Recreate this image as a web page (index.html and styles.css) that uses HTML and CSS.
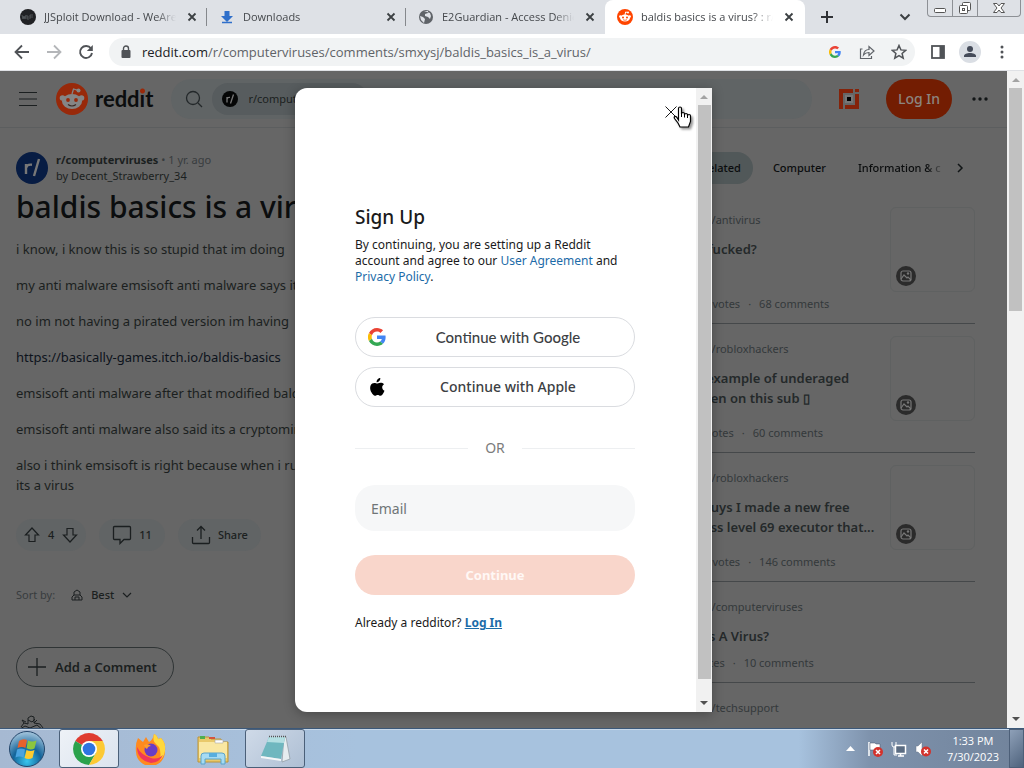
FILE: index.html
```html
<!DOCTYPE html>
<html lang="en">
<head>
    <meta charset="UTF-8">
    <meta name="viewport" content="width=device-width, initial-scale=1.0">
    <title>baldis basics is a virus? : r/computerviruses</title>
    <link rel="stylesheet" href="styles.css">
</head>
<body>

    <!-- Shared icons -->
    <svg class="sprite" aria-hidden="true">
        <symbol id="i-close" viewBox="0 0 16 16"><path d="M4.5 4.5l7 7M11.5 4.5l-7 7" stroke="#3c4043" stroke-width="1.8" fill="none"/></symbol>
        <symbol id="i-google" viewBox="0 0 48 48">
            <path fill="#ea4335" d="M24 9.5c3.5 0 6.700 1.200 9.200 3.600l6.900-6.900C35.900 2.400 30.500 0 24 0 14.600 0 6.500 5.400 2.600 13.200l8 6.200C12.400 13.700 17.700 9.500 24 9.500z"/>
            <path fill="#4285f4" d="M47 24.500c0-1.600-.2-3.100-.4-4.500H24v9h12.900c-.6 3-2.300 5.500-4.800 7.200l7.700 6C44.400 38 47 31.800 47 24.500z"/>
            <path fill="#fbbc05" d="M10.500 28.600a14.500 14.500 0 0 1 0-9.200l-8-6.200a24 24 0 0 0 0 21.600z"/>
            <path fill="#34a853" d="M24 48c6.500 0 11.900-2.100 15.900-5.800l-7.700-6c-2.200 1.500-4.900 2.300-8.200 2.300-6.300 0-11.600-4.200-13.500-9.900l-8 6.200C6.500 42.600 14.600 48 24 48z"/>
        </symbol>
        <symbol id="i-picture" viewBox="0 0 20 20">
            <circle cx="10" cy="10" r="10" fill="#2b2b2b"/>
            <rect x="5" y="5" width="10" height="10" rx="2" fill="none" stroke="#777" stroke-width="1.200"/>
            <path d="M5 13l3-4 3 3 1-1 3 3" fill="none" stroke="#777" stroke-width="1.200"/><circle cx="12" cy="7.500" r="1.200" fill="#777"/>
        </symbol>
    </svg>

    <!-- Browser tabs -->
    <header class="tab-strip">
        <div class="tab">
            <svg class="favicon" viewBox="0 0 16 16"><circle cx="8" cy="8" r="8" fill="#202124"/><path d="M2 6l1 4 1-3 1 3 1-4M7 6v4h2M7 8h2M10 6v4M10 6h3M10 8h3" stroke="#5b5f63" fill="none" stroke-width=".8"/></svg>
            <span class="tab-title">JJSploit Download - WeAreDevs</span>
            <button class="tab-close" aria-label="Close tab"><svg viewBox="0 0 16 16"><use href="#i-close"/></svg></button>
        </div>
        <div class="tab">
            <svg class="favicon" viewBox="0 0 16 16"><path d="M5.500 2h5v5H14l-6 6-6-6h3.500z" fill="#2f6fca"/><path d="M3 13.500h10" stroke="#2f6fca" stroke-width="1.500"/></svg>
            <span class="tab-title">Downloads</span>
            <button class="tab-close" aria-label="Close tab"><svg viewBox="0 0 16 16"><use href="#i-close"/></svg></button>
        </div>
        <div class="tab">
            <svg class="favicon" viewBox="0 0 16 16"><circle cx="8" cy="8" r="7" fill="#5f6368"/><path d="M2 7l3 1 2 2-1 4-3-3zM6 2l4 0 0 2-3 1 0 2 3 1 2 2 1-3-1-3z" fill="#dee1e6"/></svg>
            <span class="tab-title">E2Guardian - Access Denied</span>
            <button class="tab-close" aria-label="Close tab"><svg viewBox="0 0 16 16"><use href="#i-close"/></svg></button>
        </div>
        <div class="tab tab-active">
            <svg class="favicon" viewBox="0 0 16 16"><circle cx="8" cy="8" r="8" fill="#ff4500"/><ellipse cx="8" cy="9" rx="5" ry="3.500" fill="#fff"/><circle cx="3.300" cy="7.500" r="1.200" fill="#fff"/><circle cx="12.700" cy="7.500" r="1.200" fill="#fff"/><path d="M8 6l.6-3 2.200.5" stroke="#fff" fill="none"/><circle cx="11" cy="3.600" r="1" fill="#fff"/><circle cx="6" cy="8.500" r="1" fill="#ff4500"/><circle cx="10" cy="8.500" r="1" fill="#ff4500"/><path d="M6 10.700q2 1.200 4 0" stroke="#ff4500" fill="none" stroke-width=".7"/></svg>
            <span class="tab-title">baldis basics is a virus? : r/computerviruses</span>
            <button class="tab-close" aria-label="Close tab"><svg viewBox="0 0 16 16"><use href="#i-close"/></svg></button>
        </div>
        <button class="new-tab" aria-label="New tab"><svg viewBox="0 0 16 16"><path d="M8 2v12M2 8h12" stroke="#303236" stroke-width="2"/></svg></button>
        <button class="tab-search" aria-label="Search tabs"><svg viewBox="0 0 16 16"><path d="M3.500 5.500L8 10l4.500-4.500" stroke="#3c4043" stroke-width="2" fill="none"/></svg></button>
        <div class="window-controls">
            <button aria-label="Minimize"><svg width="24" height="16" viewBox="0 0 24 16"><rect x="6.500" y="8.500" width="11" height="4" rx="1" fill="#fff" stroke="#555"/></svg></button>
            <button aria-label="Restore"><svg width="24" height="16" viewBox="0 0 24 16"><rect x="9.500" y="2.500" width="8" height="8" rx="1" fill="#fff" stroke="#555"/><rect x="6.500" y="5.500" width="8" height="8" rx="1" fill="#fff" stroke="#555"/><rect x="9.500" y="8.500" width="2" height="2" fill="#fff" stroke="#555"/></svg></button>
            <button aria-label="Close" class="window-close"><svg width="24" height="16" viewBox="0 0 24 16"><path d="M6.500 3.500h3.500l2 2.500 2-2.500h3.500L14 8l3.500 4.500H14L12 10l-2 2.500H6.500L10 8z" fill="#fff" stroke="#555"/></svg></button>
        </div>
    </header>

    <!-- Address bar -->
    <div class="toolbar">
        <button aria-label="Back"><svg viewBox="0 0 16 16"><path d="M15 8H2M8 1.500L1.500 8 8 14.500" stroke="#505357" stroke-width="1.800" fill="none"/></svg></button>
        <button aria-label="Forward"><svg viewBox="0 0 16 16"><path d="M1 8h13M8 1.500L14.500 8 8 14.500" stroke="#b4b6b9" stroke-width="1.800" fill="none"/></svg></button>
        <button aria-label="Reload"><svg viewBox="0 0 16 16"><path d="M13 4.500A6 6 0 1 0 14 9" stroke="#505357" stroke-width="1.900" fill="none"/><path d="M14.800 1v6H8.800z" fill="#505357"/></svg></button>
        <div class="omnibox">
            <svg class="lock" viewBox="0 0 12 14"><rect x="1.500" y="5" width="9" height="8" rx="1" fill="#505357"/><path d="M3.500 6V3.500a2.500 2.500 0 0 1 5 0V6" stroke="#505357" stroke-width="1.400" fill="none"/></svg>
            <span class="url"><span class="url-host">reddit.com</span>/r/computerviruses/comments/smxysj/baldis_basics_is_a_virus/</span>
            <button aria-label="Search with Google"><svg class="small" viewBox="0 0 48 48"><use href="#i-google"/></svg></button>
            <button aria-label="Share this page"><svg viewBox="0 0 16 16"><path d="M3.500 5H1.500v9.500h11V12M4.500 11c.5-4 2.500-5.500 5.500-5.500V2.500L15 7l-5 4.500V8.500c-2.500 0-4 .5-5.500 2.500z" stroke="#5f6368" stroke-width="1.200" fill="none"/></svg></button>
            <button aria-label="Bookmark this tab"><svg viewBox="0 0 16 16"><path d="M8 1.500l1.900 4.400 4.800.4-3.600 3.200 1.100 4.700L8 11.700l-4.200 2.500 1.100-4.700L1.300 6.300l4.800-.4z" stroke="#505357" stroke-width="1.500" fill="none"/></svg></button>
        </div>
        <button class="side-panel" aria-label="Side panel"><svg viewBox="0 0 16 16"><rect x="2" y="2" width="12" height="12" fill="none" stroke="#505357" stroke-width="1.800"/><path d="M9.500 2H14v12H9.500z" fill="#505357"/></svg></button>
        <button class="profile" aria-label="Profile"><svg viewBox="0 0 22 22"><circle cx="11" cy="11" r="11" fill="#dadee4"/><circle cx="11" cy="8" r="3" fill="#454b59"/><path d="M5 16v-1c0-2 3-3 6-3s6 1 6 3v1z" fill="#454b59"/></svg></button>
        <button aria-label="Menu"><svg viewBox="0 0 16 16"><circle cx="8" cy="3" r="1.500" fill="#505357"/><circle cx="8" cy="8" r="1.500" fill="#505357"/><circle cx="8" cy="13" r="1.500" fill="#505357"/></svg></button>
    </div>

    <div class="viewport">
        <div class="page">

            <!-- Site header -->
            <nav class="site-header">
                <button class="icon-btn" aria-label="Open navigation"><svg width="20" height="20" viewBox="0 0 20 20"><path d="M1 3.500h18M1 10h18M1 16.500h18" stroke="#1b1f20" stroke-width="1.200"/></svg></button>
                <a class="brand" href="#">
                    <svg width="32" height="32" viewBox="0 0 32 32"><circle cx="16" cy="16" r="16" fill="#98290a"/><ellipse cx="16" cy="18.500" rx="10" ry="7.500" fill="#858585"/><circle cx="6.500" cy="15" r="2.800" fill="#858585"/><circle cx="25.500" cy="15" r="2.800" fill="#858585"/><path d="M16 11l1.500-5 4.500 1.300" stroke="#858585" stroke-width="1.300" fill="none"/><circle cx="22.500" cy="7.500" r="2" fill="#858585"/><circle cx="12" cy="17" r="1.900" fill="#98290a"/><circle cx="20" cy="17" r="1.900" fill="#98290a"/><path d="M12 21.500q4 3 8 0" stroke="#3a2a25" stroke-width="1.200" fill="none"/></svg>
                    <span class="wordmark">redd<span class="dot-i">ı</span>t</span>
                </a>
                <div class="search">
                    <svg width="20" height="20" viewBox="0 0 20 20"><circle cx="9" cy="9" r="6.500" fill="none" stroke="#23282a" stroke-width="1.300"/><path d="M14 14l4 4" stroke="#23282a" stroke-width="1.300"/></svg>
                    <span class="search-chip">
                        <svg width="16" height="16" viewBox="0 0 16 16"><circle cx="8" cy="8" r="8" fill="#050606"/><path d="M5 11.500V6M5 8q.5-2 3-1.600M11.500 3.500l-3 9" stroke="#777" stroke-width="1.300" fill="none"/></svg>
                        r/computerviruses
                    </span>
                </div>
                <button class="icon-btn" aria-label="Advertise"><svg width="20" height="20" viewBox="0 0 20 20"><path d="M2 20V2h12M6 18h12V5M18 0v3" stroke="#84230a" stroke-width="4" fill="none"/><rect x="6" y="6" width="8" height="8" fill="#777"/><rect x="8" y="8" width="4" height="4" fill="#000"/></svg></button>
                <button class="login-btn">Log In</button>
                <button class="icon-btn" aria-label="More"><svg width="20" height="20" viewBox="0 0 20 20"><g fill="#111516"><circle cx="4" cy="10" r="1.700"/><circle cx="10" cy="10" r="1.700"/><circle cx="16" cy="10" r="1.700"/></g></svg></button>
            </nav>

            <div class="columns">
                <!-- Post -->
                <main class="post">
                    <div class="byline">
                        <svg width="32" height="32" viewBox="0 0 32 32"><circle cx="16" cy="16" r="16" fill="#071c43"/><path d="M10 22V12M10 16q1-4 6-3.300M23 7l-5 17" stroke="#777" stroke-width="2.400" fill="none"/></svg>
                        <div>
                            <div><b>r/computerviruses</b> <span class="muted">• 1 yr. ago</span></div>
                            <div>by Decent_Strawberry_34</div>
                        </div>
                    </div>
                    <h1>baldis basics is a virus?</h1>
                    <div class="post-body">
                        <p>i know, i know this is so stupid that im doing</p>
                        <p>my anti malware emsisoft anti malware says its</p>
                        <p>no im not having a pirated version im having</p>
                        <p><a href="#">https://basically-games.itch.io/baldis-basics</a></p>
                        <p>emsisoft anti malware after that modified baldis</p>
                        <p>emsisoft anti malware also said its a cryptominer</p>
                        <p>also i think emsisoft is right because when i run<br>its a virus</p>
                    </div>
                    <div class="actions">
                        <div class="pill votes">
                            <button aria-label="Upvote"><svg width="16" height="16" viewBox="0 0 16 16"><path d="M8 1l6.500 7H11v6.500H5V8H1.500z" fill="none" stroke="#1b1f20" stroke-width="1.200"/></svg></button>
                            <span>4</span>
                            <button aria-label="Downvote"><svg width="16" height="16" viewBox="0 0 16 16"><path d="M8 15L1.500 8H5V1.500h6V8h3.500z" fill="none" stroke="#1b1f20" stroke-width="1.200"/></svg></button>
                        </div>
                        <button class="pill"><svg width="20" height="20" viewBox="0 0 20 20"><path d="M2.500 1.500h15a1 1 0 0 1 1 1v11a1 1 0 0 1-1 1H12L8 18.500v-4H2.500a1 1 0 0 1-1-1v-11a1 1 0 0 1 1-1z" fill="none" stroke="#1b1f20" stroke-width="1.300"/></svg>11</button>
                        <button class="pill"><svg width="20" height="20" viewBox="0 0 20 20"><path d="M1.500 12v5.500a1 1 0 0 0 1 1h15a1 1 0 0 0 1-1V12M10 14V2M6 5.500l4-4 4 4" fill="none" stroke="#1b1f20" stroke-width="1.300"/></svg>Share</button>
                    </div>
                    <div class="sort">
                        <span class="muted">Sort by:</span>
                        <button class="sort-btn">
                            <svg width="12" height="12" viewBox="0 0 12 12"><path d="M1 11V8l2-2V3l3-2 3 2v3l2 2v3zM3 6h6M4 11V8h4v3" fill="none" stroke="#1b1f20"/></svg>
                            Best
                            <svg width="10" height="10" viewBox="0 0 10 10"><path d="M1 3l4 4 4-4" fill="none" stroke="#1b1f20" stroke-width="1.200"/></svg>
                        </button>
                    </div>
                    <button class="comment-btn"><svg width="20" height="20" viewBox="0 0 20 20"><path d="M10 1v18M1 10h18" stroke="#1b1f20" stroke-width="1.300"/></svg>Add a Comment</button>
                    <svg class="commenter" width="32" height="32" viewBox="0 0 32 32"><path d="M5 12l3-4 4 1V3l3-2 3 1v6l6 1 3 4M8 8l-2-3 4 2M18 8l3-3M12 5l4 2 3-3M4 14l5-3 5 2 7-3 6 5v17H4z" fill="none" stroke="#1b1f20"/></svg>
                </main>

                <!-- Related posts -->
                <aside class="related">
                    <div class="topics">
                        <button class="topic topic-on">Related</button>
                        <button class="topic">Computer</button>
                        <button class="topic topic-cut">Information &amp; c</button>
                        <svg width="12" height="12" viewBox="0 0 12 12"><path d="M4 2l4 4-4 4" fill="none" stroke="#111516" stroke-width="1.500"/></svg>
                    </div>
                    <article class="card">
                        <div class="card-text">
                            <div class="sub">r/antivirus</div>
                            <h2>Am I fucked?</h2>
                            <div class="counts">10 votes<span>·</span>68 comments</div>
                        </div>
                        <div class="thumb"><svg width="20" height="20"><use href="#i-picture"/></svg></div>
                    </article>
                    <article class="card">
                        <div class="card-text">
                            <div class="sub">r/robloxhackers</div>
                            <h2>Best example of underaged<br>children on this sub &#9647;</h2>
                            <div class="counts">9 votes<span>·</span>60 comments</div>
                        </div>
                        <div class="thumb"><svg width="20" height="20"><use href="#i-picture"/></svg></div>
                    </article>
                    <article class="card">
                        <div class="card-text">
                            <div class="sub">r/robloxhackers</div>
                            <h2>Hey guys I made a new free<br>process level 69 executor that...</h2>
                            <div class="counts">10 votes<span>·</span>146 comments</div>
                        </div>
                        <div class="thumb"><svg width="20" height="20"><use href="#i-picture"/></svg></div>
                    </article>
                    <article class="card card-short">
                        <div class="card-text">
                            <div class="sub">r/computerviruses</div>
                            <h2>Is This A Virus?</h2>
                            <div class="counts">votes<span>·</span>10 comments</div>
                        </div>
                    </article>
                    <article class="card card-short">
                        <div class="card-text">
                            <div class="sub">r/techsupport</div>
                        </div>
                    </article>
                </aside>
            </div>

            <!-- Sign up dialog -->
            <div class="overlay">
                <section class="dialog" role="dialog" aria-labelledby="signup-title">
                    <div class="dialog-body">
                        <div class="dialog-top">
                            <button class="dialog-close" aria-label="Close"><svg width="12" height="12" viewBox="0 0 12 12"><path d="M.5.5l11 11M11.500.5l-11 11" stroke="#1a1a1b"/></svg></button>
                            <svg class="hand" width="20" height="24" viewBox="0 0 20 24"><path d="M5.500 15V3.500a1.500 1.500 0 0 1 3 0V9a1.400 1.400 0 0 1 3 0v1a1.400 1.400 0 0 1 3 0v1a1.400 1.400 0 0 1 3 0v5.500L15.500 22H7l-2-4-3.500-4.500c-1-2 1-2.500 2-1.500z" fill="#fff" stroke="#000" stroke-width="1.200"/><path d="M8.500 8v4M11.500 9v3.500M14.500 10v3" stroke="#000"/></svg>
                        </div>
                        <h2 id="signup-title">Sign Up</h2>
                        <p class="legal">By continuing, you are setting up a Reddit account and agree to our <a href="#">User Agreement</a> and <a href="#">Privacy Policy</a>.</p>
                        <button class="sso sso-google"><svg width="18" height="18" viewBox="0 0 48 48"><use href="#i-google"/></svg><span>Continue with Google</span></button>
                        <button class="sso"><svg width="18" height="20" viewBox="0 0 18 20"><path d="M12.300 1c.1 1.300-.4 2.300-1.100 3.100-.7.800-1.600 1.300-2.600 1.200-.1-1.200.4-2.300 1.100-3C10.400 1.500 11.500 1 12.300 1zM16 7.300c-1.200.8-1.900 1.800-1.800 3.200.1 1.600 1 2.600 2.300 3.200-.5 1.400-1.200 2.800-2.200 4-.9 1-1.800 1.300-3.100.7-1-.5-2-.5-3 0-1.200.6-2.100.4-3-.6C2.700 15.200 1.300 11.300 2.700 8.300 3.700 6.200 6 5.400 8 6.300c.8.400 1.400.4 2.200 0 2-.9 4.400-.6 5.800 1z" fill="#000"/></svg><span>Continue with Apple</span></button>
                        <div class="divider"><span>OR</span></div>
                        <input class="email" type="email" placeholder="Email" aria-label="Email">
                        <button class="continue">Continue</button>
                        <p class="already">Already a redditor? <a href="#">Log In</a></p>
                    </div>
                    <div class="scrollbar">
                        <span class="arrow-up"></span>
                        <div class="scroll-thumb scroll-thumb-dialog"></div>
                        <span class="arrow-down"></span>
                    </div>
                </section>
            </div>
        </div>
        <div class="scrollbar page-scrollbar">
            <span class="arrow-up"></span>
            <div class="scroll-thumb"></div>
            <span class="arrow-down"></span>
        </div>
    </div>

    <!-- Windows taskbar -->
    <footer class="taskbar">
        <button class="start" aria-label="Start">
            <svg width="38" height="38" viewBox="0 0 38 38">
                <defs><radialGradient id="orb" cx=".5" cy=".85" r=".9"><stop offset="0" stop-color="#39c6ee"/><stop offset=".45" stop-color="#13649a"/><stop offset="1" stop-color="#b9d3e6"/></radialGradient></defs>
                <circle cx="19" cy="19" r="17.500" fill="url(#orb)" stroke="#24466b"/>
                <path d="M11 11q4-3 8-1l-1.500 8q-4-2-8 0z" fill="#e8622c"/><path d="M20 10.500q4 2 8.500 0l-2 8q-4 2-8-.2z" fill="#8cc63f"/><path d="M9 19.500q4-2 8 0l-1.500 8q-4-2-8 0z" fill="#4aa3e0"/><path d="M18.500 20q4 2 8 0l-2 8q-4 2-8 0z" fill="#fccb2f"/>
            </svg>
        </button>
        <button class="task task-active" aria-label="Chrome">
            <svg width="32" height="32" viewBox="0 0 32 32"><path d="M16 16L2.200 8A16 16 0 0 1 29.800 8z" fill="#df3b2f"/><path d="M16 16L2.200 8A16 16 0 0 0 16 32l7-12z" fill="#2ba24c"/><path d="M16 8h13.800A16 16 0 0 1 16 32l7-12z" fill="#fcc934"/><circle cx="16" cy="16" r="8" fill="#fff"/><circle cx="16" cy="16" r="6.300" fill="#2f74e0"/></svg>
        </button>
        <button class="task" aria-label="Firefox">
            <svg width="32" height="32" viewBox="0 0 32 32"><path d="M3 5l5 4 3-5 3 5q4-2 5-8 3 1 4 5l3-1q5 5 4 13a14 14 0 0 1-29 1Q0 11 3 5z" fill="#ff8a1f"/><path d="M19 1q3 1 4 5l3-1q5 5 4 13-1 6-5 9 2-12-4-16-4-3-2-10z" fill="#ffd83c"/><path d="M2 14q0 13 14 16 9-1 12-8-5 5-12 3Q6 22 2 14z" fill="#f0375a"/><circle cx="16" cy="17" r="6.500" fill="#6a3cc4"/><path d="M9 12q4-2 7 1-3 0-4 3-2-1-3-4z" fill="#ff9e2b"/></svg>
        </button>
        <button class="task" aria-label="File Explorer">
            <svg width="32" height="32" viewBox="0 0 32 32"><path d="M1 4h11l2 2h10l1 3h6v20H1z" fill="#e9c96a" stroke="#bb9438"/><path d="M3 3h5v3H3z" fill="#4fae4e"/><path d="M12 4h6v2h-6z" fill="#d4553d"/><path d="M2 9h28v16H2z" fill="#f9e7a2"/><path d="M18 7h8v3h-8z" fill="#fff" stroke="#aaa" stroke-width=".6"/><path d="M4 31v-8q0-3 3-3h18q3 0 3 3v8h-4v-5H8v5z" fill="#a6dbf3" stroke="#5aa4cb"/><path d="M12 20h8v4h-8z" fill="#58aede"/></svg>
        </button>
        <button class="task task-open" aria-label="Notepad">
            <svg width="32" height="32" viewBox="0 0 32 32"><path d="M25 4l2 0 4 22-8 3z" fill="#e6ecef" stroke="#8c989f" stroke-width=".7"/><path d="M10 4h16l-4 22-20-3z" fill="#6fb7bf"/><path d="M10 4h16l-1 6-17-1z" fill="#b4dfe2"/><path d="M2 23l20 3 0 2-20-3z" fill="#f4f7f8"/><path d="M10 3.500h17" stroke="#555" stroke-width="1.500" stroke-dasharray="1 1"/></svg>
        </button>
        <div class="tray">
            <svg class="tray-more" width="9" height="6" viewBox="0 0 9 6"><path d="M4.500 0L9 5H0z" fill="#fff"/></svg>
            <svg width="16" height="16" viewBox="0 0 16 16"><path d="M2 1v14" stroke="#fff" stroke-width="1.500"/><path d="M3 2h5l1 1h4v7H8L7 9H3z" fill="#fff" stroke="#45536a" stroke-width=".5"/><circle cx="11" cy="11" r="5" fill="#d3322c"/><path d="M9 9l4 4M13 9l-4 4" stroke="#fff" stroke-width="1.500"/></svg>
            <svg width="16" height="16" viewBox="0 0 16 16"><rect x="4.500" y="4.500" width="10" height="8" fill="#5b6c82" stroke="#fff" stroke-width="1.500"/><path d="M7 15h6M9.500 13v2" stroke="#fff" stroke-width="1.500"/><path d="M1 1v3q0 2 2 2t2-2V1M3 6v8h3" stroke="#fff" fill="none"/></svg>
            <svg width="16" height="16" viewBox="0 0 16 16"><path d="M1 5h2l4-4v14l-4-4H1z" fill="#fff" stroke="#6b7688" stroke-width=".5"/><circle cx="11" cy="10.500" r="5" fill="#d3322c"/><path d="M9 8.500l4 4M13 8.500l-4 4" stroke="#fff" stroke-width="1.500"/></svg>
            <div class="clock"><div>1:33 PM</div><div>7/30/2023</div></div>
            <button class="show-desktop" aria-label="Show desktop"></button>
        </div>
    </footer>

</body>
</html>
```

FILE: styles.css
```css
/* Base */
* {
    box-sizing: border-box;
}

body {
    margin: 0;
    height: 100vh;
    display: flex;
    flex-direction: column;
    overflow: hidden;
    font-family: "Noto Sans", "Open Sans", sans-serif;
    font-size: 11px;
    line-height: 16px;
    color: #1b1f20;
}

button {
    display: flex;
    align-items: center;
    justify-content: center;
    padding: 0;
    border: none;
    background: none;
    color: inherit;
    font: inherit;
    cursor: pointer;
}

a {
    color: inherit;
    text-decoration: none;
}

svg {
    display: block;
    flex: none;
}

.sprite {
    position: absolute;
    width: 0;
    height: 0;
}

/* Tab strip */
.tab-strip {
    display: flex;
    flex: none;
    height: 34px;
    padding-left: 8px;
    background-color: #dee1e6;
    font-family: "Open Sans", sans-serif;
    color: #45484c;
}

.tab {
    display: flex;
    align-items: center;
    gap: 8px;
    width: 199px;
    padding: 0 7px 0 12px;
    background: linear-gradient(#85888c, #85888c) right center / 1px 18px no-repeat;
}

.tab:nth-child(3) {
    background: none;
}

.tab-active {
    width: 200px;
    padding-right: 8px;
    background: #fff;
    border-radius: 8px 8px 0 0;
}

.favicon,
.tab-close svg,
.new-tab svg,
.tab-search svg {
    width: 16px;
    height: 16px;
}

.tab-title {
    flex: 1;
    overflow: hidden;
    white-space: nowrap;
    -webkit-mask-image: linear-gradient(to right, #000 85%, transparent);
    mask-image: linear-gradient(to right, #000 85%, transparent);
}

.new-tab {
    width: 44px;
}

.tab-search {
    width: 30px;
    margin-left: auto;
}

.window-controls {
    display: flex;
    height: 17px;
    margin: 0 3px 0 7px;
    border: 1px solid #8d9095;
    border-top: none;
    border-radius: 0 0 4px 4px;
}

.window-controls button {
    width: 25px;
    border-right: 1px solid #8d9095;
}

.window-controls .window-close {
    width: 42px;
    border-right: none;
}

/* Toolbar */
.toolbar {
    display: flex;
    flex: none;
    align-items: center;
    height: 37px;
    padding: 0 6px;
    background-color: #fff;
    border-bottom: 1px solid #dfe1e5;
}

.toolbar button {
    width: 32px;
    height: 28px;
}

.toolbar button svg {
    width: 16px;
    height: 16px;
}

.toolbar button .small {
    width: 12px;
    height: 12px;
}

.toolbar .profile svg {
    width: 22px;
    height: 22px;
}

.toolbar .side-panel {
    margin-left: 7px;
}

.omnibox {
    display: flex;
    flex: 1;
    align-items: center;
    height: 28px;
    margin-left: 7px;
    padding-left: 11px;
    border-radius: 14px;
    background-color: #f1f3f4;
}

.lock {
    width: 12px;
    height: 14px;
}

.url {
    flex: 1;
    margin-left: 10px;
    font-family: "Open Sans", sans-serif;
    font-size: 13px;
    color: #5f6368;
}

.url-host {
    color: #202124;
}

/* Web page */
.viewport {
    display: flex;
    flex: 1;
    min-height: 0;
}

.page {
    position: relative;
    flex: 1;
    overflow: hidden;
    background-color: #666;
}

.site-header {
    display: flex;
    align-items: center;
    height: 57px;
    padding: 0 15px 0 16px;
    border-bottom: 1px solid #5c5e5f;
}

.icon-btn {
    width: 24px;
    height: 40px;
}

.brand {
    display: flex;
    align-items: center;
    gap: 7px;
    margin-left: 16px;
}

.wordmark {
    font-family: Lato, sans-serif;
    font-size: 22px;
    font-weight: 700;
    line-height: 32px;
    color: #0b0d0e;
}

.dot-i {
    background: radial-gradient(circle at 50% 6px, #98290a 2px, transparent 3px);
}

.search {
    display: flex;
    flex: 1;
    align-items: center;
    gap: 8px;
    height: 40px;
    margin: 0 25px 0 18px;
    padding-left: 13px;
    border-radius: 20px;
    background-color: #606465;
}

.search-chip {
    display: flex;
    align-items: center;
    gap: 10px;
    height: 32px;
    padding: 0 24px 0 10px;
    border-radius: 16px;
    background-color: #575c5e;
}

.login-btn {
    height: 40px;
    margin: 0 16px 0 25px;
    padding: 0 12px;
    border-radius: 20px;
    background-color: #731d02;
    color: #8c8580;
    font-size: 14px;
    font-weight: 500;
}

.columns {
    display: flex;
    justify-content: space-between;
    gap: 24px;
    padding: 0 32px 0 16px;
}

.muted {
    color: #383c3e;
}

/* Post */
.post {
    flex: 1;
    min-width: 0;
    padding-top: 24px;
}

.byline {
    display: flex;
    gap: 8px;
}

h1 {
    margin: 2px 0 11px;
    font-size: 30px;
    font-weight: 500;
    line-height: 42px;
    color: #0b0d0e;
}

.post-body {
    font-size: 13px;
    line-height: 20px;
}

.post-body p {
    margin: 0 0 16px;
}

.post-body a {
    color: #0d131c;
}

.actions {
    display: flex;
    gap: 13px;
    margin-top: 24px;
}

.pill {
    display: flex;
    align-items: center;
    gap: 7px;
    height: 32px;
    padding: 0 13px;
    border-radius: 16px;
    background-color: #616465;
    font-weight: 500;
}

.votes {
    gap: 8px;
    padding: 0 8px;
}

.sort {
    display: flex;
    align-items: center;
    gap: 16px;
    margin-top: 36px;
}

.sort-btn {
    gap: 8px;
    font-weight: 500;
}

.comment-btn {
    gap: 8px;
    height: 40px;
    margin-top: 44px;
    padding: 0 16px 0 10px;
    border: 1px solid #2f3435;
    border-radius: 20px;
    font-size: 13px;
    font-weight: 600;
}

.commenter {
    margin-top: 28px;
}

/* Related */
.related {
    width: 300px;
    padding-top: 24px;
}

.topics {
    display: flex;
    align-items: center;
    gap: 8px;
    padding-left: 14px;
    font-weight: 500;
    color: #0b0d0e;
}

.topic {
    height: 32px;
    padding: 0 12px;
    border-radius: 16px;
}

.topic-on {
    background-color: #515859;
}

.topic-cut {
    width: 100px;
    padding-right: 0;
    justify-content: flex-start;
    overflow: hidden;
    white-space: nowrap;
    -webkit-mask-image: linear-gradient(to right, #000 80%, transparent);
    mask-image: linear-gradient(to right, #000 80%, transparent);
}

.card {
    display: flex;
    justify-content: space-between;
    height: 129px;
    padding-top: 12px;
    border-bottom: 1px solid #45484a;
}

.topics + .card {
    height: 140px;
    padding-top: 23px;
}

.card-text {
    display: flex;
    flex-direction: column;
    height: 105px;
    padding-top: 5px;
    white-space: nowrap;
}

.sub,
.counts {
    color: #34393b;
}

.sub {
    padding-left: 32px;
}

.card h2 {
    margin: 11px 0 0;
    font-size: 13px;
    font-weight: 600;
    line-height: 20px;
    color: #24292a;
}

.counts {
    margin-top: auto;
    padding-left: 22px;
}

.counts span {
    margin: 0 8px;
}

.card-short {
    height: 101px;
}

.card-short .card-text {
    height: 77px;
}

.thumb {
    display: flex;
    align-items: flex-end;
    width: 85px;
    height: 85px;
    padding: 5px;
    border: 1px solid #5f6161;
    border-radius: 6px;
}

/* Dialog */
.overlay {
    position: absolute;
    inset: 0;
    display: flex;
    align-items: center;
    justify-content: center;
    padding-top: 1px;
}

.dialog {
    display: flex;
    width: 417px;
    height: 95%;
    overflow: hidden;
    border-radius: 12px 0 0 12px;
    background-color: #fff;
    box-shadow: 0 2px 12px rgba(0, 0, 0, 0.3);
    font-size: 12px;
}

.dialog-body {
    flex: 1;
    padding: 16px 61px 16px 60px;
    color: #1a1a1b;
}

.dialog-top {
    position: relative;
    display: flex;
    justify-content: flex-end;
    height: 101px;
    margin-right: -44px;
}

.dialog-close {
    width: 16px;
    height: 16px;
}

.hand {
    position: absolute;
    top: 1px;
    right: -14px;
    filter: drop-shadow(2px 2px 1px rgba(0, 0, 0, 0.4));
}

.dialog h2 {
    margin: 0 0 8px;
    font-size: 19px;
    font-weight: 500;
    line-height: 24px;
}

.legal,
.already {
    margin: 0;
}

.legal {
    margin-bottom: 32px;
}

.legal a {
    color: #1c6ba8;
}

.sso {
    width: 100%;
    height: 40px;
    margin-bottom: 10px;
    padding: 0 12px;
    border: 1px solid #dadce0;
    border-radius: 20px;
    color: #3c4043;
    font-size: 14px;
    font-weight: 500;
}

.sso span {
    flex: 1;
    padding-left: 8px;
}

.sso-google {
    font-family: Lato, sans-serif;
    font-size: 15px;
}

.divider {
    display: flex;
    align-items: center;
    gap: 17px;
    margin: 30px 0 26px;
    color: #7c7c7c;
    font-size: 14px;
    line-height: 22px;
}

.divider::before,
.divider::after {
    content: "";
    flex: 1;
    height: 1px;
    background-color: #edeff1;
}

.email {
    display: block;
    width: 100%;
    height: 46px;
    padding: 0 16px;
    border: none;
    border-radius: 20px;
    background-color: #f6f7f8;
    font: inherit;
    font-size: 14px;
}

.email::placeholder {
    color: #6f7577;
}

.continue {
    width: 100%;
    height: 40px;
    margin: 24px 0 20px;
    border-radius: 20px;
    background-color: #f9d6cb;
    color: #fff8f5;
    font-size: 13px;
    font-weight: 700;
}

.already a {
    color: #1c6ba8;
    font-weight: 700;
    text-decoration: underline;
}

/* Scrollbars */
.scrollbar {
    display: flex;
    flex: none;
    flex-direction: column;
    align-items: center;
    width: 16px;
    background-color: #f1f1f1;
}

.page-scrollbar {
    width: 17px;
}

.arrow-up,
.arrow-down {
    flex: none;
    margin: 7px 0 6px;
    border: 4px solid transparent;
}

.arrow-up {
    margin-top: 3px;
    border-bottom-color: #a3a3a3;
}

.arrow-down {
    margin: auto 0 3px;
    border-top-color: #505050;
}

.scroll-thumb {
    width: 13px;
    height: 34%;
    background-color: #c1c1c1;
}

.scroll-thumb-dialog {
    height: 92%;
}

/* Taskbar */
.taskbar {
    display: flex;
    flex: none;
    align-items: center;
    height: 40px;
    padding-left: 8px;
    border-top: 1px solid #3c5878;
    box-shadow: inset 0 1px 0 #c7d8ea;
    background: linear-gradient(to right, #a6b9d2 0, #a7c2de 35%, #a7c2de 78%, #7e92ac 85%, #71839b);
}

.start {
    width: 38px;
    margin-right: 13px;
}

.task {
    width: 60px;
    height: 39px;
    margin-right: 2px;
}

.task-active,
.task-open {
    border: 1px solid #4b6079;
    border-radius: 3px;
    background: linear-gradient(135deg, #eef2f7, #dbe3ee);
}

.task-open {
    background: linear-gradient(135deg, #cfdae8, #aebfd4);
}

.tray {
    display: flex;
    align-items: center;
    gap: 8px;
    height: 100%;
    margin-left: auto;
    color: #fff;
}

.tray-more {
    margin-right: 4px;
}

.clock {
    margin: 0 2px 0 8px;
    font-family: "Open Sans", sans-serif;
    text-align: center;
}

.show-desktop {
    width: 15px;
    height: 100%;
    border: 1px solid #4c5f78;
    background: linear-gradient(135deg, #8ea0b8, #4f637d);
}
```
